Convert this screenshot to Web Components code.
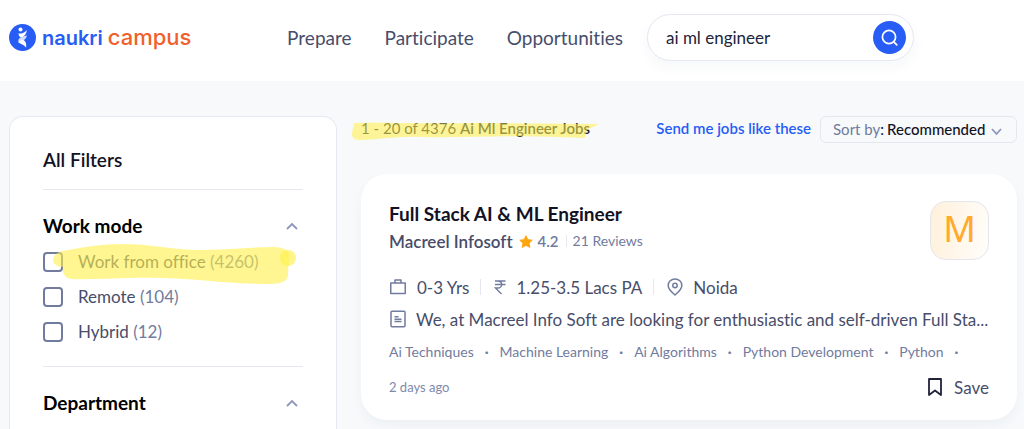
<!DOCTYPE html>
<html lang="en">
<head>
<meta charset="utf-8">
<title>Ai Ml Engineer Jobs</title>
<style>
body { margin: 0; background: #f7f9fb; font-family: Lato, "Liberation Sans", sans-serif; font-variant-ligatures: none; color: #474d6a; }
</style>
</head>
<body>
<campus-page></campus-page>
<script>
const define = (name, html, setup) => {
  const template = document.createElement('template');
  template.innerHTML = '<style>*{box-sizing:border-box}:host{display:block}svg{display:block;flex:none}h1,h2,h3,p,ul{margin:0;padding:0}button,input,select{font:inherit;color:inherit;margin:0}button{border:0;padding:0;background:none;cursor:pointer}a{text-decoration:none;color:inherit}</style>' + html;
  customElements.define(name, class extends HTMLElement {
    constructor() {
      super();
      this.attachShadow({ mode: 'open' }).append(template.content.cloneNode(true));
    }
    connectedCallback() { if (setup) setup(this, this.shadowRoot); }
  });
};

define('campus-logo', `
<style>
:host { flex: none; }
a { display: flex; align-items: center; gap: 6px; font: 600 20px/28px Inter, sans-serif; color: #275df5; }
.word { display: flex; align-items: baseline; gap: 5px; }
.campus { font-size: 22px; font-weight: 500; color: #f05f2c; }
</style>
<a href="#">
  <svg width="27" height="27" viewBox="0 0 27 27" aria-hidden="true">
    <circle cx="13.500" cy="13.500" r="13.500" fill="#275df5"/>
    <circle cx="11.500" cy="5.500" r="2" fill="#fff"/>
    <path d="M9.600 9.200c3 .8 6-.2 8.200-3.200-.2 3.900-2 5.800-5.300 7.700-2.100-1-3.100-2.500-2.900-4.500z" fill="#fff"/>
    <path d="M17.700 11.200c.2 2.600-1.800 4.300-4 5.300l-4.200 2c-.7-3.400 1-4.700 3.600-5.400z" fill="#d3deff"/>
    <path d="M9.500 18.500c1-1.800 2.900-2.700 4.900-2.700 2.500 1.900 3.300 4.300 2.700 7.900-1.700-2.900-4.500-3.400-7.600-5.200z" fill="#fff"/>
  </svg>
  <span class="word"><span>naukri</span><span class="campus">campus</span></span>
</a>`);

define('search-box', `
<style>
:host { flex: 0 1 267px; min-width: 180px; }
form { display: flex; align-items: center; height: 47px; margin: 0; padding: 0 7px 0 18px; border: 1px solid #e5e7f3; border-radius: 24px; background: #fff; box-shadow: 0 6px 14px rgba(30,40,80,.04); }
input { flex: 1; min-width: 0; padding: 0; border: 0; outline: 0; background: none; font-size: 17px; color: #20233a; }
button { display: grid; place-items: center; width: 33px; height: 33px; border-radius: 50%; background: #275df5; }
</style>
<form role="search">
  <input type="text" value="ai ml engineer" aria-label="Search jobs">
  <button type="button" aria-label="Search">
    <svg width="17" height="17" viewBox="0 0 17 17" fill="none" stroke="#fff" stroke-width="1.700" stroke-linecap="round"><circle cx="8" cy="8" r="6.600"/><path d="M12.800 12.800l3 3"/></svg>
  </button>
</form>`);

define('site-header', `
<style>
:host { flex: none; background: #fff; }
header { display: flex; align-items: center; height: 81px; padding: 0 110px 6px 9px; }
nav { display: flex; gap: 33px; margin: 0 24px 0 auto; font-size: 19px; line-height: 24px; }
</style>
<header>
  <campus-logo></campus-logo>
  <nav><a href="#">Prepare</a><a href="#">Participate</a><a href="#">Opportunities</a></nav>
  <search-box></search-box>
</header>`);

define('filter-option', `
<style>
label { display: flex; align-items: center; gap: 15px; height: 35px; font-size: 17px; line-height: 22px; }
input { appearance: none; flex: none; width: 20px; height: 20px; border: 2px solid #717b9e; border-radius: 4px; background: #fff; }
slot[name=count] { color: #717b9e; }
</style>
<label><input type="checkbox"><span><slot></slot> <slot name="count"></slot></span></label>`,
(host, root) => {
  if (!host.textContent.trim()) root.querySelector('input').setAttribute('aria-label', host.getAttribute('label'));
});

define('filter-group', `
<style>
:host { padding: 24px 0 17px; border-top: 1px solid #e7e7f1; }
button { display: flex; align-items: center; justify-content: space-between; width: 100%; height: 24px; padding-right: 5px; margin-bottom: 6px; color: #000; text-align: left; }
h3 { font-size: 19px; line-height: 24px; font-weight: 700; }
</style>
<button type="button" aria-expanded="true"><h3><slot name="title"></slot></h3>
<svg width="12" height="8" viewBox="0 0 12 8" fill="none" stroke="#8d97be" stroke-width="1.800" aria-hidden="true"><path d="M1 7l5-5 5 5"/></svg></button>
<slot></slot>`);

define('filter-panel', `
<style>
:host { padding: 31px 33px 0; border: 1px solid #e7e7f1; border-bottom: 0; border-radius: 14px 14px 0 0; background: #fff; overflow-y: auto; scrollbar-width: none; }
h2 { font-size: 19px; line-height: 24px; font-weight: 600; color: #121224; margin-bottom: 17px; }
.group { position: relative; }
.marker { position: absolute; left: 10px; top: 54px; pointer-events: none; }
</style>
<h2>All Filters</h2>
<div class="group">
  <filter-group>
    <span slot="title">Work mode</span>
    <filter-option>Work from office<span slot="count">(4260)</span></filter-option>
    <filter-option>Remote<span slot="count">(104)</span></filter-option>
    <filter-option>Hybrid<span slot="count">(12)</span></filter-option>
  </filter-group>
  <svg class="marker" width="246" height="44" viewBox="0 0 246 44" fill="#fff04a" aria-hidden="true">
    <path fill-opacity=".6" d="M10 8C26 5 45 1 68 1C98 1 116 6 143 7C178 7 199 4 220 4C230 4 236 7 236 12L235 32C235 38 228 41 217 41C174 41 148 36 108 35C75 34 42 37 20 36C12 36 9 30 10 24C-3 24-3 10 10 8z"/>
    <circle fill-opacity=".65" cx="235" cy="15" r="8"/>
  </svg>
</div>
<filter-group>
  <span slot="title">Department</span>
  <filter-option label="Department option"></filter-option>
</filter-group>`);

define('results-bar', `
<style>
.bar { display: flex; align-items: flex-start; height: 27px; font-size: 15px; line-height: 24px; }
.count { position: relative; font-size: 15px; font-weight: 400; color: #1c2038; white-space: nowrap; }
.count b { font-weight: 600; }
.marker { position: absolute; left: -9px; top: 5px; pointer-events: none; }
.alert { margin-left: auto; font-weight: 600; color: #275df5; white-space: nowrap; }
.sort { position: relative; display: flex; height: 27px; margin-left: 9px; padding-left: 12px; border: 1px solid #e5e7ef; border-radius: 6px; color: #717b9e; white-space: nowrap; }
.sort i { font-style: normal; color: #121224; }
select { appearance: none; width: 132px; height: 24px; padding: 0 0 0 3px; border: 0; outline: 0; background: none; color: #121224; font-weight: 500; }
.sort svg { position: absolute; right: 14px; top: 11px; pointer-events: none; }
</style>
<div class="bar">
  <h1 class="count">1 - 20 of 4376 <b>Ai Ml Engineer Jobs</b>
    <svg class="marker" width="248" height="20" viewBox="0 0 248 20" aria-hidden="true"><path fill="#fff04a" fill-opacity=".56" d="M2 2C30 1 70 3 120 2L247 3L235 9L233 17L205 16C160 14 110 17 70 16C45 15 25 19 8 19C1 19 0 16 0 12z"/></svg>
  </h1>
  <a class="alert" href="#">Send me jobs like these</a>
  <div class="sort"><label for="sort">Sort by<i>:</i></label>
    <select id="sort"><option>Recommended</option></select>
    <svg width="11" height="8" viewBox="0 0 11 8" fill="none" stroke="#8d97be" stroke-width="1.800" aria-hidden="true"><path d="M1 1l4.500 5L10 1"/></svg>
  </div>
</div>`);

define('job-card', `
<style>
article { padding: 27px 28px 21px; border-radius: 26px; background: #fff; box-shadow: 0 6px 12px rgba(30,40,80,.04); }
.top { display: flex; justify-content: space-between; height: 75px; }
h2 { font-size: 19px; line-height: 26px; font-weight: 700; color: #121224; }
.company { display: flex; align-items: center; height: 28px; font-size: 17px; font-weight: 600; }
.company svg { margin: 0 5px 0 6px; }
.rate { font-size: 15px; font-weight: 600; color: #717b9e; }
.rev { font-size: 14px; font-weight: 400; color: #717b9e; margin-left: 7px; padding-left: 6px; border-left: 1px solid #e7e7f1; line-height: 12px; }
.badge { display: grid; place-items: start center; width: 59px; height: 59px; border: 1px solid #e5e5ee; border-radius: 16px; background: linear-gradient(100deg, #fff0da, #fffefb); color: #ffaa2b; font: 400 36px/54px "Noto Sans", sans-serif; }
.facts { display: flex; align-items: center; height: 22px; padding: 0; list-style: none; font-size: 17px; }
.facts li { display: flex; align-items: center; gap: 10px; height: 16px; white-space: nowrap; }
.facts li + li { margin-left: 11px; padding-left: 13px; border-left: 1px solid #e7e7f1; }
.desc { display: flex; align-items: center; gap: 9px; height: 22px; margin-top: 10px; font-size: 17px; white-space: nowrap; }
.tags { display: flex; flex-wrap: wrap; height: 20px; margin-top: 12px; list-style: none; font-size: 14px; line-height: 20px; color: #717b9e; }
.tags li::after { content: "·"; margin: 0 11px; font-weight: 700; }
.foot { display: flex; align-items: center; justify-content: space-between; height: 24px; margin-top: 13px; }
time { font-size: 13px; color: #8089ab; }
.foot button { display: flex; align-items: center; gap: 12px; font-size: 17px; }
</style>
<article>
  <div class="top">
    <div>
      <h2>Full Stack AI &amp; ML Engineer</h2>
      <div class="company"><span>Macreel Infosoft</span>
        <svg width="14" height="13" viewBox="0 0 14 13" aria-hidden="true"><path fill="#fda50f" stroke="#fda50f" stroke-linejoin="round" d="M7 .800l1.800 3.900 4.400.500-3.200 3 .900 4.200L7 10.300l-3.900 2.100.900-4.200-3.200-3 4.400-.500z"/></svg>
        <span class="rate">4.2</span><span class="rev">21 Reviews</span>
      </div>
    </div>
    <div class="badge">M</div>
  </div>
  <ul class="facts">
    <li><svg width="18" height="18" viewBox="0 0 18 18" fill="none" stroke="#717b9e" stroke-width="1.500" stroke-linejoin="round" aria-hidden="true"><path d="M1.750 5h14.500v10.500H1.750zM6 5V2h6v3"/></svg>0-3 Yrs</li>
    <li><svg width="12" height="16" viewBox="0 0 12 16" fill="none" stroke="#717b9e" stroke-width="1.300" aria-hidden="true"><path d="M1 2h10.500M1 5.500h10.500M1 2h2.500c5.500 0 5.500 7 0 7H1.500l6 6"/></svg>1.25-3.5 Lacs PA</li>
    <li><svg width="16" height="18" viewBox="0 0 16 18" fill="none" stroke="#717b9e" stroke-width="1.500" stroke-linejoin="round" aria-hidden="true"><path d="M8 17c-2-2-6.800-5.300-6.800-9.600a6.800 6.500 0 0 1 13.600 0C14.800 11.700 10 15 8 17z"/><circle cx="8" cy="7.500" r="2.200"/></svg>Noida</li>
  </ul>
  <div class="desc">
    <svg width="18" height="18" viewBox="0 0 18 18" fill="none" stroke="#717b9e" stroke-width="1.500" aria-hidden="true"><rect x="2" y="1.200" width="14" height="15.500" rx="1"/><path d="M5.500 6.800h4M5.500 9.200h7M5.500 11.600h7"/></svg>
    <p>We, at Macreel Info Soft are looking for enthusiastic and self-driven Full Sta...</p>
  </div>
  <ul class="tags"><li>Ai Techniques</li><li>Machine Learning</li><li>Ai Algorithms</li><li>Python Development</li><li>Python</li></ul>
  <div class="foot">
    <time>2 days ago</time>
    <button type="button"><svg width="14" height="18" viewBox="0 0 14 18" fill="none" stroke="#20233a" stroke-width="1.800" stroke-linejoin="round" aria-hidden="true"><path d="M1 1h12v16l-6-4.500L1 17z"/></svg>Save</button>
  </div>
</article>`);

define('campus-page', `
<style>
:host { display: flex; flex-direction: column; height: 100vh; }
main { flex: 1; min-height: 0; display: grid; grid-template: minmax(0, 1fr) / minmax(0, 1fr) minmax(0, 2fr); gap: 24px; padding: 35px 7px 0 9px; }
.results { display: flex; flex-direction: column; gap: 31px; margin: 0 -7px 0 -24px; padding: 0 7px 0 24px; overflow-y: auto; scrollbar-width: none; }
</style>
<site-header></site-header>
<main>
  <filter-panel></filter-panel>
  <div class="results"><results-bar></results-bar><job-card></job-card></div>
</main>`);
</script>
</body>
</html>
